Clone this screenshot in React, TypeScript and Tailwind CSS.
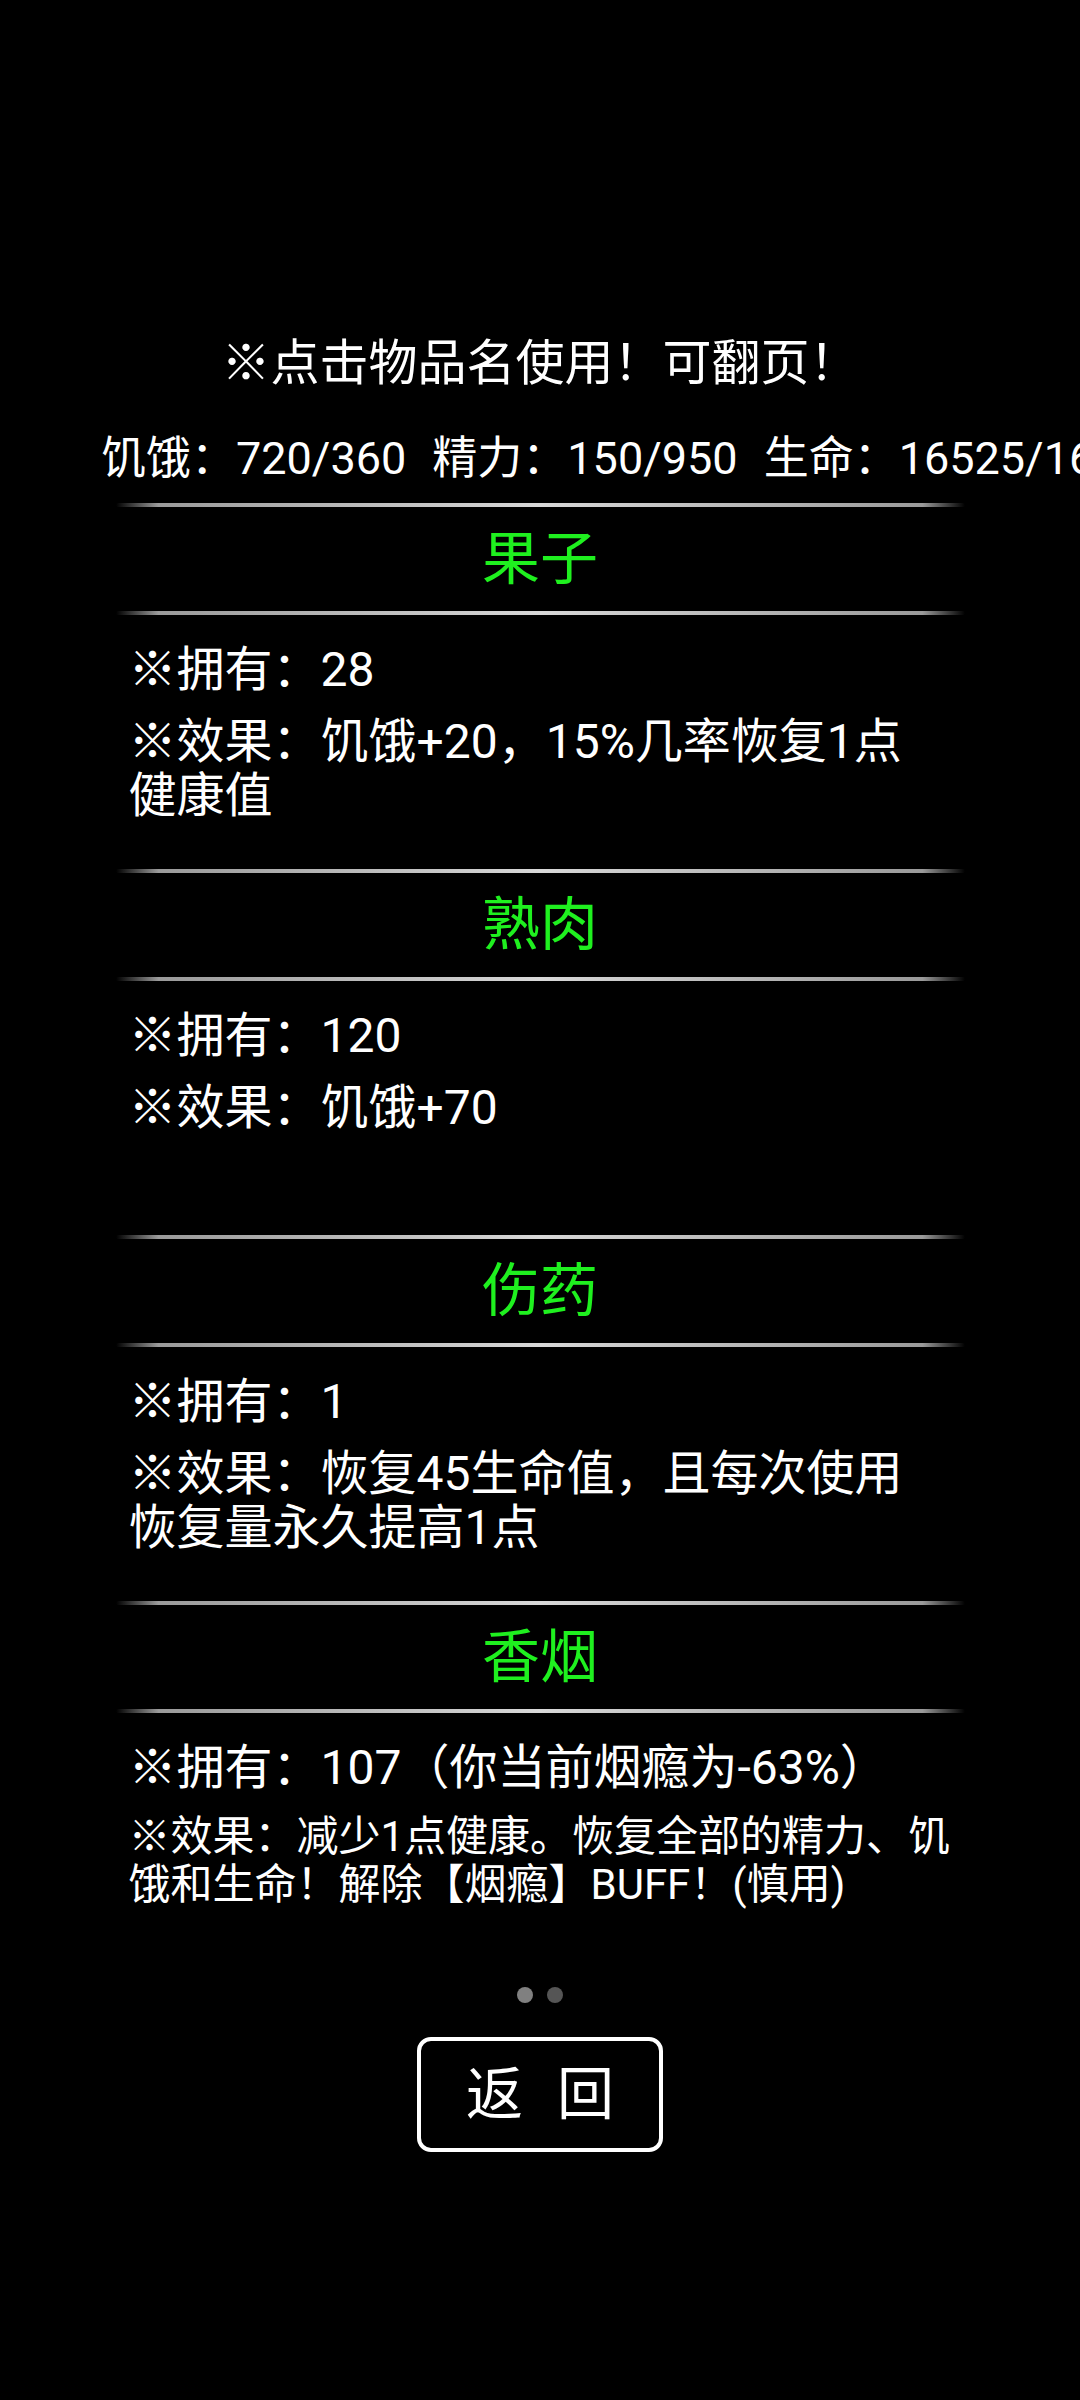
import React from 'react';

const font = { fontFamily: 'Roboto, "Noto Sans CJK SC", sans-serif' };

type Line = { parts: string[]; small?: boolean };
type Item = { name: string; lines: Line[] };

const items: Item[] = [
  {
    name: '果子',
    lines: [{ parts: ['※拥有：28'] }, { parts: ['※效果：饥饿+20，15%几率恢复1点', '健康值'] }],
  },
  {
    name: '熟肉',
    lines: [{ parts: ['※拥有：120'] }, { parts: ['※效果：饥饿+70'] }],
  },
  {
    name: '伤药',
    lines: [{ parts: ['※拥有：1'] }, { parts: ['※效果：恢复45生命值，且每次使用', '恢复量永久提高1点'] }],
  },
  {
    name: '香烟',
    lines: [
      { parts: ['※拥有：107（你当前烟瘾为-63%）'] },
      { parts: ['※效果：减少1点健康。恢复全部的精力、饥', '饿和生命！解除【烟瘾】BUFF！(慎用)'], small: true },
    ],
  },
];

function Divider() {
  return (
    <div className="h-[4px] w-full rounded-full bg-[linear-gradient(to_right,transparent,#9a9a9a_5%,#d8d8d8_50%,#9a9a9a_95%,transparent)]" />
  );
}

function ItemBlock({ item }: { item: Item }) {
  return (
    <div>
      <div className="flex h-[104px] items-center justify-center">
        <button className="text-[58px] leading-none text-[#1ff01f]">{item.name}</button>
      </div>
      <Divider />
      <div className="flex h-[254px] flex-col gap-[18px] px-[13px] pt-[28px] text-white">
        {item.lines.map((l, i) => (
          <p
            key={i}
            className={
              l.small
                ? 'whitespace-nowrap text-[42px] leading-[48px]'
                : 'whitespace-nowrap text-[48px] leading-[54px]'
            }
          >
            {l.parts.map((p, j) => (
              <span key={j} className="block">
                {p}
              </span>
            ))}
          </p>
        ))}
      </div>
    </div>
  );
}

export default function App() {
  return (
    <div className="min-h-[2400px] w-[1080px] overflow-hidden bg-black text-white" style={font}>
      <div className="pt-[334px] text-center text-[49px] leading-[60px]">※点击物品名使用！可翻页！</div>
      <div className="mt-[37px] flex gap-[26px] whitespace-nowrap pl-[101px] text-[45px] leading-[56px]">
        <span>饥饿：720/360</span>
        <span>精力：150/950</span>
        <span>生命：16525/16525</span>
      </div>
      <div className="mx-auto mt-[16px] w-[849px]">
        <Divider />
        {items.map((item, i) => (
          <div key={item.name}>
            <ItemBlock item={item} />
            {i < items.length - 1 && <Divider />}
          </div>
        ))}
      </div>
      <div className="mt-[20px] flex justify-center gap-[14px]">
        <span className="h-[16px] w-[16px] rounded-full bg-[#808080]" />
        <span className="h-[16px] w-[16px] rounded-full bg-[#555555]" />
      </div>
      <div className="mt-[34px] flex justify-center">
        <button className="flex h-[115px] w-[246px] items-center justify-center gap-[34px] rounded-[14px] border-[4px] border-white text-[57px] leading-none">
          <span>返</span>
          <span>回</span>
        </button>
      </div>
    </div>
  );
}
